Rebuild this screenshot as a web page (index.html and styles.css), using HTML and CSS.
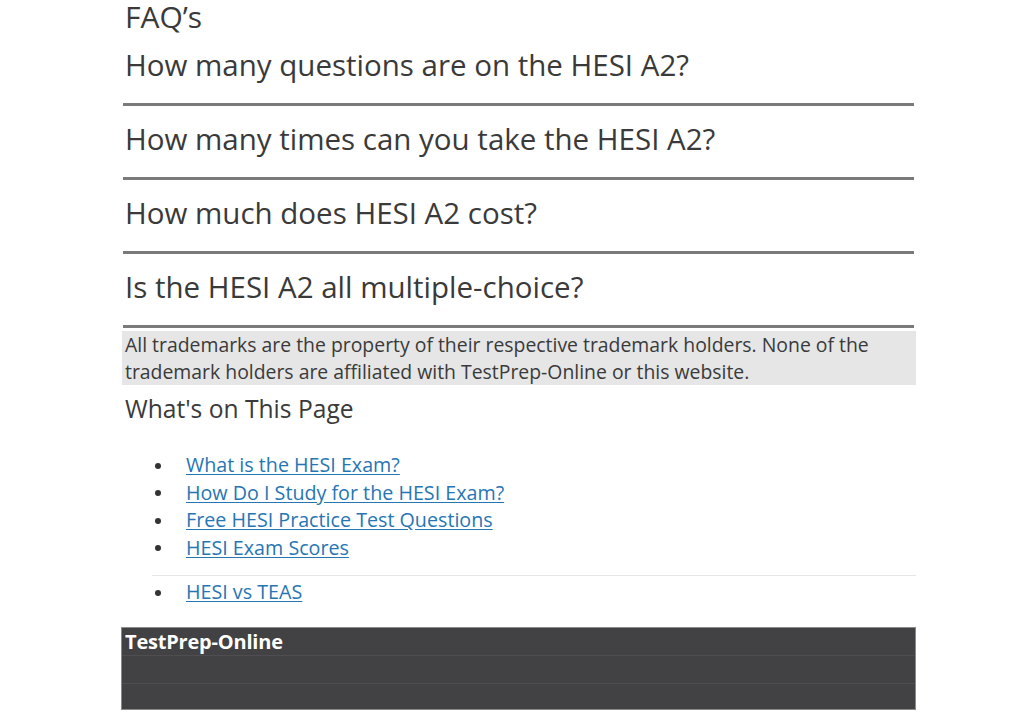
FILE: index.html
```html
<!DOCTYPE html>
<html>
<head>
<meta charset="utf-8">
<link rel="stylesheet" href="styles.css">
</head>
<body>
<div class="page">
  <h2 class="faq-title">FAQ’s</h2>
  <div class="faq-item">How many questions are on the HESI A2?</div>
  <div class="faq-item">How many times can you take the HESI A2?</div>
  <div class="faq-item">How much does HESI A2 cost?</div>
  <div class="faq-item">Is the HESI A2 all multiple-choice?</div>
  <div class="notice">All trademarks are the property of their respective trademark holders. None of the trademark holders are affiliated with TestPrep-Online or this website.</div>
  <h3 class="toc-title">What's on This Page</h3>
  <ul class="toc toc-main">
    <li><a href="#">What is the HESI Exam?</a></li>
    <li><a href="#">How Do I Study for the HESI Exam?</a></li>
    <li><a href="#">Free HESI Practice Test Questions</a></li>
    <li><a href="#">HESI Exam Scores</a></li>
  </ul>
  <ul class="toc toc-extra">
    <li><a href="#">HESI vs TEAS</a></li>
  </ul>
  <div class="footer">
    <div class="footer-row footer-brand">TestPrep-Online</div>
    <div class="footer-row"></div>
    <div class="footer-row"></div>
  </div>
</div>
</body>
</html>
```
FILE: styles.css
```css
html, body {
  margin: 0;
  padding: 0;
  background: #ffffff;
}
body {
  font-family: "Open Sans", "Noto Sans", sans-serif;
  color: #3a3a3a;
}
.page {
  width: 794px;
  margin-left: 122px;
}
.faq-title {
  margin: 0;
  padding: 2px 0 0 3px;
  font-weight: 400;
  font-size: 30px;
  line-height: 30px;
  height: 30px;
  color: #3a3a3a;
}
.faq-item {
  margin-left: 1px;
  margin-right: 2px;
  padding: 14px 0 19px 2px;
  font-size: 29.5px;
  line-height: 38px;
  color: #3a3a3a;
  border-bottom: 3px solid #7a7a7a;
}
.notice {
  margin-top: 3px;
  background: #e6e6e6;
  padding: 0 3px;
  font-size: 19.4px;
  line-height: 27px;
  color: #3a3a3a;
}
.toc-title {
  margin: 8px 0 0 0;
  padding-left: 3px;
  font-weight: 400;
  font-size: 24.6px;
  line-height: 32px;
  color: #3a3a3a;
}
.toc {
  margin: 0 0 0 30px;
  padding: 0;
  list-style: none;
  font-size: 19.7px;
  line-height: 27.5px;
}
.toc-main {
  margin-top: 26px;
}
.toc li {
  display: flex;
  align-items: center;
}
.toc li::before {
  content: "";
  flex-shrink: 0;
  width: 6px;
  height: 6px;
  border-radius: 50%;
  background: #333333;
  margin: 2px 25px 0 3px;
}
.toc a {
  color: #2676b4;
  text-decoration: underline;
  text-underline-offset: 2px;
}
.toc-extra {
  margin-top: 14px;
  padding-top: 2px;
  border-top: 1px solid #e6e6e6;
}
.footer {
  margin-top: 21px;
  width: 795px;
  margin-left: -1px;
  background: #424143;
  border: 1px solid #8a8a8a;
  box-sizing: border-box;
}
.footer-row {
  height: 27px;
  border-bottom: 1px solid #4e4d50;
}
.footer-row:last-child {
  border-bottom: none;
  height: 25px;
}
.footer-brand {
  color: #ffffff;
  font-weight: 700;
  font-size: 20px;
  line-height: 27px;
  padding-left: 3px;
  letter-spacing: -0.2px;
}
```
